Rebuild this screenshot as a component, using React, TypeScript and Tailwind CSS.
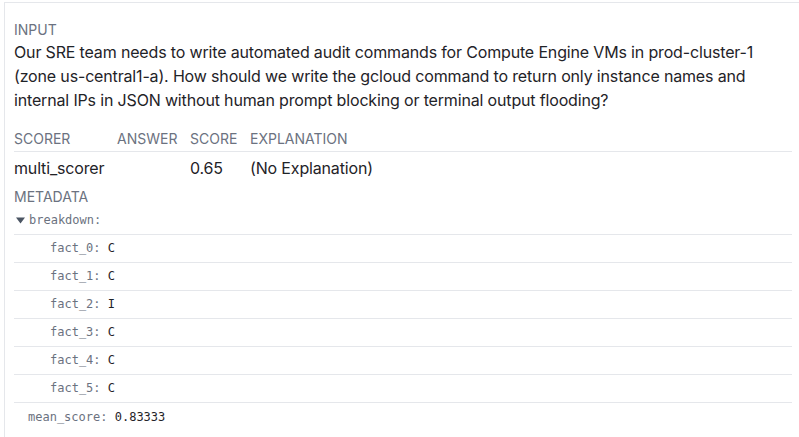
import React from 'react';

const facts = [
  { key: 'fact_0', value: 'C' },
  { key: 'fact_1', value: 'C' },
  { key: 'fact_2', value: 'I' },
  { key: 'fact_3', value: 'C' },
  { key: 'fact_4', value: 'C' },
  { key: 'fact_5', value: 'C' },
];

const sans = "font-['Inter','Liberation_Sans',sans-serif]";
const mono = "font-['DejaVu_Sans_Mono','Liberation_Mono',monospace]";

const Label: React.FC<{ children: React.ReactNode }> = ({ children }) => (
  <div className="text-[14px] leading-5 text-[#6b7280] uppercase">{children}</div>
);

const App: React.FC = () => {
  return (
    <div className={`${sans} bg-white w-[799px] h-[437px] overflow-hidden`}>
      <div className="ml-1 mt-0.5 border-l border-t border-[#e5e7eb] h-full pl-[9px] pr-[7px] pt-[17px]">
        <Label>Input</Label>
        <p className="text-[16px] leading-6 tracking-[-0.01em] text-[#1f2328]">
          Our SRE team needs to write automated audit commands for Compute Engine VMs in prod-cluster-1
          (zone us-central1-a). How should we write the gcloud command to return only instance names and
          internal IPs in JSON without human prompt blocking or terminal output flooding?
        </p>

        <div className="mt-[17px]">
          <div className="grid grid-cols-[103px_73px_60px_1fr] border-b border-[#e5e7eb] pb-[2px] text-[14px] leading-5 text-[#6b7280]">
            <span>SCORER</span>
            <span>ANSWER</span>
            <span>SCORE</span>
            <span>EXPLANATION</span>
          </div>
          <div className="grid grid-cols-[103px_73px_60px_1fr] pt-1 text-[16px] leading-6 tracking-[-0.01em] text-[#1f2328]">
            <span>multi_scorer</span>
            <span></span>
            <span>0.65</span>
            <span>(No Explanation)</span>
          </div>
        </div>

        <div className="mt-[7px]">
          <Label>Metadata</Label>
          <div className={`${mono} text-[12px] leading-4`}>
            <div className="flex items-center gap-[4px] pt-[5px] pb-[6px] pl-[2px] border-b border-[#e5e7eb] text-[#6b7280]">
              <svg width="9" height="7" viewBox="0 0 9 7" className="shrink-0">
                <path d="M0 0.5 L9 0.5 L4.5 6.5 Z" fill="#4b5563" />
              </svg>
              <span>breakdown:</span>
            </div>
            {facts.map((f) => (
              <div
                key={f.key}
                className="flex items-center h-[28px] pl-9 pb-[2px] border-b border-[#e5e7eb] whitespace-pre"
              >
                <span className="text-[#6b7280]">{f.key}: </span>
                <span className="text-[#1f2328]">{f.value}</span>
              </div>
            ))}
            <div className="pl-[14px] pt-[6px] whitespace-pre">
              <span className="text-[#6b7280]">mean_score: </span>
              <span className="text-[#1f2328]">0.83333</span>
            </div>
          </div>
        </div>
      </div>
    </div>
  );
};

export default App;
